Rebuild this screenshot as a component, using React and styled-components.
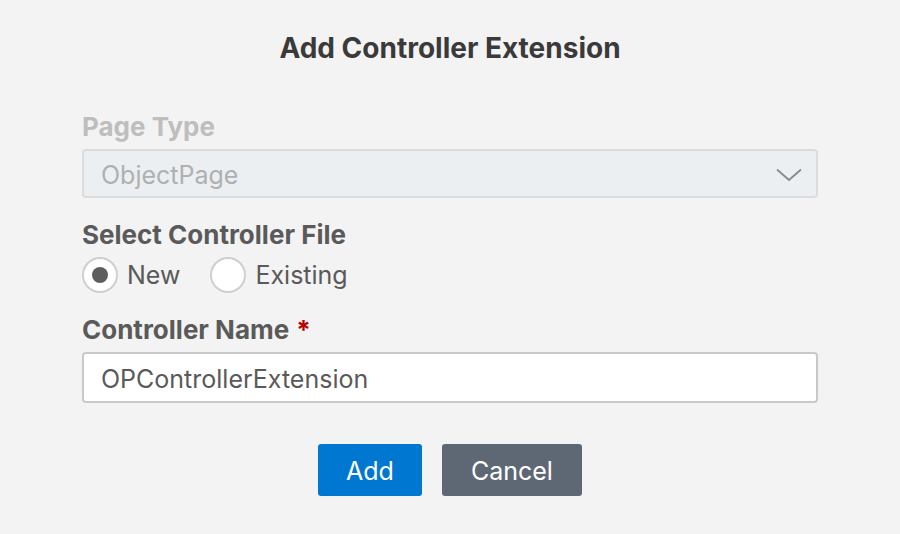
import React, { useState } from "react";
import styled, { createGlobalStyle } from "styled-components";

const GlobalStyle = createGlobalStyle`
  html, body {
    margin: 0;
    padding: 0;
    background: #f3f3f3;
    font-family: Inter, "Noto Sans", sans-serif;
  }
`;

const Dialog = styled.div`
  width: 900px;
  height: 534px;
  box-sizing: border-box;
  padding: 30px 82px 0 82px;
  display: flex;
  flex-direction: column;
`;

const Title = styled.h1`
  margin: 0 0 45px 0;
  text-align: center;
  font-size: 28px;
  font-weight: 700;
  color: #3a3a3a;
  line-height: 36px;
`;

const Label = styled.label`
  display: block;
  font-size: 26px;
  font-weight: 700;
  line-height: 32px;
  color: ${(p) => (p.disabled ? "#bebebe" : "#5a5a5a")};
  margin-bottom: 6px;
`;

const Required = styled.span`
  color: #bb0000;
  margin-left: 7px;
`;

const SelectBox = styled.div`
  height: 49px;
  box-sizing: border-box;
  border: 2px solid #dcdcdc;
  border-radius: 4px;
  background: #eceff2;
  display: flex;
  align-items: center;
  justify-content: space-between;
  padding: 3px 14px 0 17px;
  font-size: 25px;
  color: #b0b0b0;
  margin-bottom: 21px;
`;

const RadioRow = styled.div`
  display: flex;
  align-items: center;
  gap: 30px;
  margin-bottom: 21px;
`;

const RadioOption = styled.div`
  display: flex;
  align-items: center;
  gap: 9px;
  font-size: 25px;
  color: #5a5a5a;
  cursor: pointer;
`;

const Circle = styled.span`
  width: 36px;
  height: 36px;
  box-sizing: border-box;
  border-radius: 50%;
  border: 2px solid #cfcfcf;
  background: #fff;
  display: flex;
  align-items: center;
  justify-content: center;
  &::after {
    content: "";
    width: 16px;
    height: 16px;
    border-radius: 50%;
    background: ${(p) => (p.checked ? "#5e5e5e" : "transparent")};
  }
`;

const TextInput = styled.input`
  height: 51px;
  box-sizing: border-box;
  border: 2px solid #c9c9c9;
  border-radius: 4px;
  background: #fff;
  padding: 2px 17px 0;
  font-family: inherit;
  font-size: 25px;
  color: #5a5a5a;
  outline: none;
  width: 100%;
`;

const ButtonBar = styled.div`
  display: flex;
  justify-content: center;
  gap: 20px;
  margin-top: 41px;
`;

const Button = styled.button`
  height: 52px;
  padding: 2px ${(p) => p.pad}px 0;
  border: none;
  border-radius: 3px;
  background: ${(p) => p.bg};
  color: #fff;
  font-family: inherit;
  font-size: 25px;
  cursor: pointer;
`;

export default function App() {
  const [mode, setMode] = useState("new");
  const [name, setName] = useState("OPControllerExtension");

  return (
    <>
      <GlobalStyle />
      <Dialog>
        <Title>Add Controller Extension</Title>
        <Label disabled>Page Type</Label>
        <SelectBox>
          <span>ObjectPage</span>
          <svg width="26" height="14" viewBox="0 0 26 14" fill="none">
            <path d="M1 1.5 L13 12 L25 1.5" stroke="#8a8a8a" strokeWidth="1.8" />
          </svg>
        </SelectBox>
        <Label>Select Controller File</Label>
        <RadioRow>
          <RadioOption onClick={() => setMode("new")}>
            <Circle checked={mode === "new"} />
            New
          </RadioOption>
          <RadioOption onClick={() => setMode("existing")}>
            <Circle checked={mode === "existing"} />
            Existing
          </RadioOption>
        </RadioRow>
        <Label>
          Controller Name<Required>*</Required>
        </Label>
        <TextInput value={name} onChange={(e) => setName(e.target.value)} />
        <ButtonBar>
          <Button bg="#0078d2" pad={28}>Add</Button>
          <Button bg="#5e6875" pad={29}>Cancel</Button>
        </ButtonBar>
      </Dialog>
    </>
  );
}
